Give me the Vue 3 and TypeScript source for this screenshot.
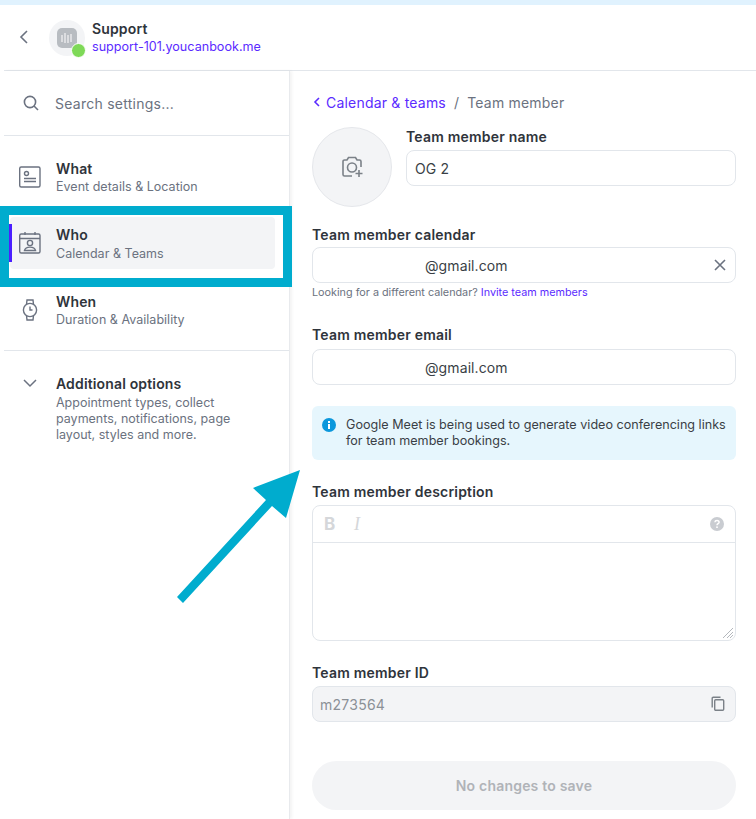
<script setup lang="ts">
interface NavItem { key: string; title: string; sub: string; active: boolean }
const items: NavItem[] = [
  { key: 'what', title: 'What', sub: 'Event details & Location', active: false },
  { key: 'who', title: 'Who', sub: 'Calendar & Teams', active: true },
  { key: 'when', title: 'When', sub: 'Duration & Availability', active: false },
]
</script>

<template>
  <div class="page">
    <div class="topstrip"></div>
    <header class="header">
      <svg class="back" width="12" height="18" viewBox="0 0 12 18"><path d="M9 3 3 9l6 6" fill="none" stroke="#6b7280" stroke-width="1.6"/></svg>
      <div class="logo">
        <div class="logo-inner">
          <svg width="16" height="16" viewBox="0 0 16 16"><g stroke="#f3f4f6" stroke-width="1.2"><path d="M3 5v7M6 3v10M9 5v8M12 4v8"/></g></svg>
        </div>
        <span class="dot"></span>
      </div>
      <div class="brand">
        <div class="brand-name">Support</div>
        <div class="brand-link">support-101.youcanbook.me</div>
      </div>
    </header>
    <div class="body">
      <aside class="sidebar">
        <div class="search">
          <svg width="18" height="18" viewBox="0 0 18 18"><circle cx="8" cy="8" r="5.6" fill="none" stroke="#6b7280" stroke-width="1.6"/><path d="m12 12 4 4" stroke="#6b7280" stroke-width="1.6"/></svg>
          <span>Search settings...</span>
        </div>
        <nav class="nav">
          <div v-for="item in items" :key="item.key" class="nav-item" :class="{ active: item.active }">
            <span v-if="item.active" class="bar"></span>
            <svg v-if="item.key === 'what'" class="nav-icon" width="24" height="24" viewBox="0 0 24 24" fill="none" stroke="#6b7280" stroke-width="1.4">
              <rect x="1.700" y="2" width="20.300" height="20" rx="1.500"/><circle cx="8.500" cy="8.500" r="2"/><path d="M6 13.500h12M6 16.500h12"/>
            </svg>
            <svg v-else-if="item.key === 'who'" class="nav-icon" width="24" height="24" viewBox="0 0 24 24" fill="none" stroke="#6b7280" stroke-width="1.4">
              <rect x="1.700" y="3" width="20.300" height="19" rx="1.500"/><path d="M2 7.500h20M7 1v3M17 1v3"/><circle cx="12" cy="12" r="2.600"/><path d="M6.500 19.500c.6-2.600 2.600-3.400 5.500-3.400s4.900.8 5.500 3.400z"/>
            </svg>
            <svg v-else class="nav-icon" width="24" height="24" viewBox="0 0 24 24" fill="none" stroke="#6b7280" stroke-width="1.4">
              <circle cx="12" cy="12" r="6.600"/><path d="M8.500 6.500 9 2h6l.5 4.500M8.500 17.500 9 22h6l.5-4.500M12 8.500V12h2.500"/>
            </svg>
            <div class="nav-text">
              <div class="nav-title">{{ item.title }}</div>
              <div class="nav-sub">{{ item.sub }}</div>
            </div>
          </div>
        </nav>
        <div class="more">
          <svg class="more-icon" width="16" height="10" viewBox="0 0 16 10"><path d="m2 2 6 6 6-6" fill="none" stroke="#6b7280" stroke-width="1.5"/></svg>
          <div>
            <div class="nav-title">Additional options</div>
            <div class="more-sub">Appointment types, collect payments, notifications, page layout, styles and more.</div>
          </div>
        </div>
      </aside>

      <main class="main">
        <div class="crumbs">
          <svg width="10" height="12" viewBox="0 0 10 12"><path d="M7 2 3 6l4 4" fill="none" stroke="#5b2bff" stroke-width="1.6"/></svg>
          <span class="crumb-link">Calendar &amp; teams</span>
          <span class="crumb-sep">/</span>
          <span class="crumb-cur">Team member</span>
        </div>

        <div class="name-row">
          <div class="avatar">
            <svg width="24" height="24" viewBox="0 0 24 24" fill="none" stroke="#7b8188" stroke-width="1.6">
              <path d="M12 21H4.500A1.500 1.500 0 0 1 3 19.500v-13A1.500 1.500 0 0 1 4.500 5H7l1.500-2.500h7L17 5h2.500A1.500 1.500 0 0 1 21 6.500V12"/>
              <circle cx="12" cy="12.500" r="4.500"/><path d="M19 15v7M15.500 18.500h7"/>
            </svg>
          </div>
          <div class="name-field">
            <div class="label name-label">Team member name</div>
            <div class="input"><span>OG 2</span></div>
          </div>
        </div>

        <div class="label cal-label">Team member calendar</div>
        <div class="input redacted">
          <span>@gmail.com</span>
          <svg class="input-icon" width="14" height="14" viewBox="0 0 14 14"><path d="m2 2 10 10M12 2 2 12" stroke="#6b7280" stroke-width="1.6"/></svg>
        </div>
        <div class="helper">Looking for a different calendar? <span class="helper-link">Invite team members</span></div>

        <div class="label email-label">Team member email</div>
        <div class="input redacted"><span>@gmail.com</span></div>

        <div class="info">
          <svg class="info-icon" width="16" height="16" viewBox="0 0 16 16"><circle cx="8" cy="8" r="7" fill="#0a97dc"/><rect x="7" y="7" width="2" height="5" fill="#fff"/><rect x="7" y="4" width="2" height="2" fill="#fff"/></svg>
          <div>Google Meet is being used to generate video conferencing links for team member bookings.</div>
        </div>

        <div class="label desc-label">Team member description</div>
        <div class="editor">
          <div class="toolbar">
            <span class="tb-b">B</span>
            <span class="tb-i">I</span>
            <svg class="tb-help" width="16" height="16" viewBox="0 0 16 16"><circle cx="8" cy="8" r="7" fill="#c9ccd1"/><path d="M5.900 6.200C6 5 6.900 4.400 8 4.400c1.200 0 2.100.7 2.100 1.800 0 1.500-2.100 1.500-2.100 3" fill="none" stroke="#fff" stroke-width="1.500"/><rect x="7.200" y="10.400" width="1.600" height="1.600" fill="#fff"/></svg>
          </div>
          <svg class="resize" width="12" height="12" viewBox="0 0 12 12"><path d="M11 1 1 11M11 5 5 11M11 8 8 11" stroke="#b4b8bd" stroke-width="1"/></svg>
        </div>

        <div class="label id-label">Team member ID</div>
        <div class="input disabled">
          <span>m273564</span>
          <svg class="input-icon" width="16" height="16" viewBox="0 0 16 16" fill="none" stroke="#7b8188" stroke-width="1.400"><rect x="4.700" y="3.700" width="9" height="10.600" rx="1"/><path d="M2.200 11.500V2.200a1 1 0 0 1 1-1h7.300"/></svg>
        </div>

        <div class="save">No changes to save</div>
      </main>
    </div>

    <div class="highlight"></div>
    <svg class="arrow" width="756" height="819" viewBox="0 0 756 819">
      <polygon points="177,597 266,500 253,488 300,470 286,518 272,506 183,603" fill="#00acce"/>
    </svg>
  </div>
</template>

<style>
html, body { margin: 0; background: #fff; }
</style>

<style scoped>
.page {
  position: relative;
  width: 756px;
  height: 819px;
  overflow: hidden;
  background: #fff;
  font-family: Inter, "Noto Sans", sans-serif;
  color: #2f343b;
}
.topstrip { height: 5px; background: #e0f2fe; }
.header {
  height: 65px;
  margin-left: 4px;
  display: flex;
  align-items: center;
  border-bottom: 1px solid #e2e6eb;
  box-sizing: content-box;
}
.back { margin-left: 14px; margin-top: -2px; }
.logo {
  position: relative;
  width: 36px;
  height: 36px;
  margin-left: 19px;
  margin-top: 0;
  border-radius: 50%;
  background: #f3f4f6;
  display: flex;
  align-items: center;
  justify-content: center;
}
.logo-inner {
  width: 20px;
  height: 20px;
  border-radius: 5px;
  background: #b8bcc1;
  display: flex;
  align-items: center;
  justify-content: center;
}
.dot {
  position: absolute;
  right: -1px;
  bottom: -2px;
  width: 13px;
  height: 13px;
  border-radius: 50%;
  background: #7ed957;
  border: 1px solid #fff;
}
.brand { margin-left: 7px; margin-top: 0; }
.brand-name { font-size: 14px; font-weight: 600; line-height: 18px; letter-spacing: 0.15px; }
.brand-link { font-size: 12.600px; line-height: 18px; color: #5b2bff; }
.body { display: flex; height: 748px; }
.sidebar {
  width: 285px;
  margin-left: 4px;
  flex: none;
  border-right: 1px solid #e8eaed;
  box-shadow: 2px 0 3px rgba(0, 0, 0, 0.05);
  box-sizing: content-box;
}
.search {
  height: 64px;
  display: flex;
  align-items: center;
  gap: 15px;
  padding-left: 18px;
  border-bottom: 1px solid #e2e6eb;
  font-size: 14px;
  letter-spacing: 0.25px;
  color: #6b7280;
}
.nav {
  display: flex;
  flex-direction: column;
  gap: 14px;
  padding: 15px 0 14px;
  border-bottom: 1px solid #e2e6eb;
}
.nav-item {
  position: relative;
  height: 52px;
  margin-left: 6px;
  width: 265px;
  display: flex;
  align-items: center;
  border-radius: 4px;
  box-sizing: border-box;
  padding-left: 8px;
}
.nav-item.active { background: #f3f4f6; margin-bottom: 1px; }
.active .nav-text { margin-top: 1px; }
.active .nav-sub { margin-top: 1px; }
.bar {
  position: absolute;
  left: -1px;
  top: 7px;
  width: 3px;
  height: 38px;
  background: #4b1fff;
}
.nav-icon { flex: none; }
.nav-text { margin-left: 14px; }
.nav-title { font-size: 14px; font-weight: 600; line-height: 18px; letter-spacing: 0.15px; }
.nav-sub { font-size: 12.500px; line-height: 17px; color: #6b7280; letter-spacing: 0.02px; }
.more { display: flex; padding: 24px 0 0 18px; }
.more-icon { flex: none; margin: 3px 18px 0 0; }
.more-sub { width: 190px; font-size: 12.500px; line-height: 16px; color: #6b7280; margin-top: 2px; }
.main { flex: 1; padding: 0 20px 0 22px; min-width: 0; }
.crumbs { height: 18px; margin-top: 22px; display: flex; align-items: center; font-size: 14px; letter-spacing: 0.2px; }
.crumb-link { color: #5b2bff; margin-left: 4px; }
.crumb-sep { color: #6b7280; margin: 0 8px; }
.crumb-cur { color: #6b7280; }
.name-row { display: flex; gap: 14px; margin-top: 16px; }
.avatar {
  width: 80px;
  height: 80px;
  flex: none;
  box-sizing: border-box;
  border-radius: 50%;
  background: #f3f4f6;
  border: 1px solid #e5e7eb;
  display: flex;
  align-items: center;
  justify-content: center;
}
.name-field { flex: 1; padding-top: 1px; }
.label { font-size: 14px; font-weight: 600; line-height: 18px; letter-spacing: 0.2px; }
.name-label { margin-bottom: 4px; }
.input {
  height: 36px;
  box-sizing: border-box;
  border: 1px solid #e2e6eb;
  border-radius: 8px;
  display: flex;
  align-items: center;
  justify-content: space-between;
  padding: 0 8px;
  font-size: 14px;
  letter-spacing: 0.1px;
  color: #3a3f46;
}
.redacted { padding-left: 112px; }
.input-icon { flex: none; }
.cal-label { margin-top: 19px; margin-bottom: 3px; }
.helper { font-size: 10.800px; line-height: 14px; color: #6b7280; margin-top: 3px; }
.helper-link { color: #5b2bff; }
.email-label { margin-top: 26px; margin-bottom: 5px; }
.info {
  margin-top: 21px;
  height: 54px;
  box-sizing: border-box;
  padding: 11px 8px 0 9px;
  background: #e6f6fd;
  border-radius: 6px;
  display: flex;
  gap: 9px;
  font-size: 12.600px;
  line-height: 16px;
  color: #3a3f46;
}
.info-icon { flex: none; margin-top: 0; }
.desc-label { margin-top: 23px; margin-bottom: 4px; }
.editor {
  position: relative;
  height: 136px;
  box-sizing: border-box;
  border: 1px solid #e2e6eb;
  border-radius: 8px;
}
.toolbar {
  height: 37px;
  box-sizing: border-box;
  border-bottom: 1px solid #e2e6eb;
  display: flex;
  align-items: center;
  padding: 0 11px;
  color: #d5d7da;
  font-size: 16px;
}
.tb-b { font-weight: 700; font-size: 17px; width: 30px; }
.tb-i { font-style: italic; font-family: "Liberation Serif", serif; font-size: 18px; font-weight: 400; }
.tb-help { margin-left: auto; margin-right: -1px; }
.resize { position: absolute; right: 1px; bottom: 1px; }
.id-label { margin-top: 23px; margin-bottom: 4px; }
.disabled { background: #f3f4f6; color: #8b9096; padding: 0 9px 0 7px; letter-spacing: 0.25px; }
.save {
  margin-top: 39px;
  height: 49px;
  box-sizing: border-box;
  padding-bottom: 1px;
  border-radius: 25px;
  background: #f3f4f6;
  display: flex;
  align-items: center;
  justify-content: center;
  font-size: 14px;
  font-weight: 600;
  letter-spacing: 0.2px;
  color: #b0b3b8;
}
.highlight {
  position: absolute;
  left: 0;
  top: 206px;
  width: 292px;
  height: 81px;
  box-sizing: border-box;
  border: 9px solid #00acce;
  pointer-events: none;
}
.arrow { position: absolute; left: 0; top: 0; pointer-events: none; }
</style>
